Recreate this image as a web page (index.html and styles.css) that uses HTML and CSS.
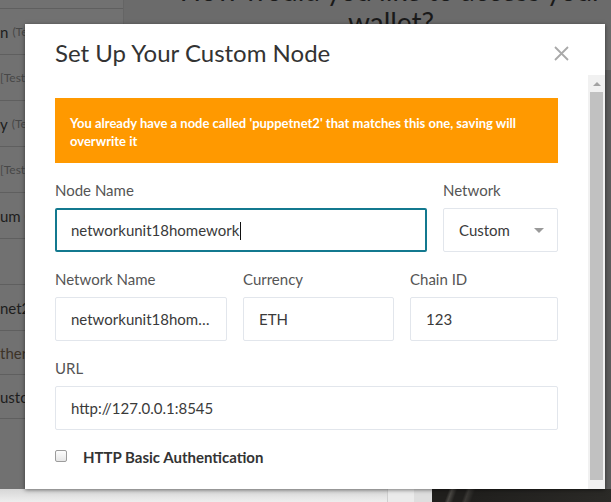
FILE: index.html
```html
<!DOCTYPE html>
<html lang="en">
<head>
<meta charset="utf-8">
<title>Set Up Your Custom Node</title>
<link rel="stylesheet" href="styles.css">
</head>
<body>
<div class="page">
  <div class="main">
    <aside class="sidebar">
      <div class="item first"></div>
      <div class="item"><span class="nm">n</span><span class="tag">(Testnet)</span></div>
      <div class="item"><span class="tag solo">[Testnet]</span></div>
      <div class="item"><span class="nm">y</span><span class="tag">(Testnet)</span></div>
      <div class="item"><span class="tag solo">[Testnet]</span></div>
      <div class="item"><span class="nm">um Classic</span></div>
      <div class="item"></div>
      <div class="item"><span class="nm">net2</span></div>
      <div class="item short"><span class="nm other">ther Networks</span></div>
      <div class="item short"><span class="nm">ustom</span></div>
    </aside>
    <section class="content">
      <h1 class="hero">How would you like to access your wallet?</h1>
    </section>
  </div>
  <footer class="strip">
    <div class="strip-left"><span class="strip-text">ected and is connected.</span></div>
    <div class="strip-mid"></div>
    <div class="strip-mid2"></div>
    <div class="strip-photo"></div>
  </footer>
</div>

<div class="modal">
  <div class="modal-head">
    <h2 class="modal-title">Set Up Your Custom Node</h2>
    <svg class="close" width="15" height="15" viewBox="0 0 15 15" aria-label="Close">
      <path d="M1 1 L14 14 M14 1 L1 14" stroke="#a9a9a9" stroke-width="1.8" fill="none"/>
    </svg>
  </div>
  <div class="modal-body">
    <div class="body-inner">
      <div class="alert">You already have a node called 'puppetnet2' that matches this one, saving will overwrite it</div>

      <div class="row row-1">
        <div class="field">
          <span class="label">Node Name</span>
          <div class="input focus">networkunit18homework<span class="cursor"></span></div>
        </div>
        <div class="field">
          <span class="label">Network</span>
          <div class="input select"><span>Custom</span><span class="caret"></span></div>
        </div>
      </div>

      <div class="row row-2">
        <div class="field">
          <span class="label">Network Name</span>
          <div class="input">networkunit18homework</div>
        </div>
        <div class="field">
          <span class="label">Currency</span>
          <div class="input">ETH</div>
        </div>
        <div class="field">
          <span class="label">Chain ID</span>
          <div class="input">123</div>
        </div>
      </div>

      <div class="row row-3">
        <div class="field">
          <span class="label">URL</span>
          <div class="input">http://127.0.0.1:8545</div>
        </div>
      </div>

      <div class="check-row">
        <span class="checkbox"></span>
        <span class="check-label">HTTP Basic Authentication</span>
      </div>
    </div>
    <div class="scrollbar">
      <div class="sb-up"><span class="sb-arrow"></span></div>
      <div class="sb-thumb"></div>
    </div>
  </div>
</div>
</body>
</html>
```

FILE: styles.css
```css
html, body {
  margin: 0;
  padding: 0;
}

body {
  width: 611px;
  height: 502px;
  overflow: hidden;
  position: relative;
  font-family: Lato, "Open Sans", "Liberation Sans", sans-serif;
}

.page {
  display: flex;
  flex-direction: column;
  height: 502px;
}

.main {
  display: flex;
  height: 489px;
  flex: none;
  overflow: hidden;
  background:
    linear-gradient(to bottom, #6b6b6b 70px, transparent 70px) 605px 0 / 6px 100% no-repeat,
    linear-gradient(to right, #6b6b6b 605px, #5c5c5c 605px);
}

.sidebar {
  width: 123px;
  flex: none;
  background: #717171;
  border-right: 1px solid #656565;
}

.item {
  height: 45px;
  border-bottom: 1px solid #5f5f5f;
  display: flex;
  align-items: center;
  white-space: nowrap;
  overflow: hidden;
}

.item.first {
  height: 8px;
}

.item.short {
  height: 43px;
}

.nm {
  font-size: 15px;
  color: #1d1d1d;
}

.nm.other {
  color: #3d3328;
}

.tag {
  font-size: 12px;
  color: #474747;
  margin-left: 4px;
}

.tag.solo {
  margin-left: 0;
}

.content {
  flex: 1;
  min-width: 0;
}

.hero {
  width: 460px;
  margin: -26px 0 0 37px;
  font-size: 28px;
  line-height: 32px;
  font-weight: 400;
  text-align: center;
  color: #1a1a1a;
}

.strip {
  height: 13px;
  flex: none;
  display: flex;
  overflow: hidden;
}

.strip-left {
  width: 387px;
  background: linear-gradient(#d6d6d6, #eeeeee);
  overflow: hidden;
  white-space: nowrap;
}

.strip-text {
  display: block;
  margin-top: -13px;
  font-size: 13px;
  line-height: 16px;
  color: #2a2a2a;
}

.strip-mid {
  width: 26px;
  border-left: 1px solid #cfcfcf;
  background: #ebebeb;
}

.strip-mid2 {
  width: 18px;
  background: #dedede;
}

.strip-photo {
  flex: 1;
  background: linear-gradient(110deg, #201f1d 0, #201f1d 16px, #4a4844 19px, #201f1d 24px, #201f1d 32px, #3a3835 35px, #201f1d 41px, #2b2a27 100%);
}

/* Modal */
.modal {
  position: absolute;
  left: 25px;
  top: 24px;
  width: 580px;
  height: 465px;
  background: #fff;
  display: flex;
  flex-direction: column;
  box-shadow: 0 1px 4px rgba(0, 0, 0, 0.5);
}

.modal-head {
  height: 51px;
  box-sizing: border-box;
  padding: 14px 36px 0 30px;
  display: flex;
  justify-content: space-between;
  align-items: flex-start;
  flex: none;
}

.modal-title {
  margin: 0;
  font-size: 24px;
  line-height: 29px;
  font-weight: 400;
  color: #333;
}

.close {
  margin-top: 8px;
}

.modal-body {
  flex: 1;
  display: flex;
  min-height: 0;
}

.body-inner {
  flex: 1;
  padding: 23px 30px 0 30px;
  overflow: hidden;
}

.alert {
  background: #ff9900;
  color: #fff;
  font-weight: 700;
  font-size: 13px;
  line-height: 18px;
  padding: 16px 15px 13px;
}

.row {
  display: grid;
  column-gap: 16px;
  margin-top: 17px;
}

.row-1 {
  grid-template-columns: 372px 1fr;
}

.row-2 {
  grid-template-columns: 172px 151px 1fr;
}

.row-3 {
  grid-template-columns: 1fr;
}

.field {
  min-width: 0;
}

.label {
  display: block;
  font-size: 15px;
  line-height: 20px;
  color: #555;
  margin-bottom: 8px;
}

.input {
  height: 44px;
  box-sizing: border-box;
  border: 1px solid #e2e6ec;
  border-radius: 2px;
  padding: 0 15px;
  font-size: 15px;
  line-height: 42px;
  color: #3a3a3a;
  white-space: nowrap;
  overflow: hidden;
  text-overflow: ellipsis;
}

.input.focus {
  border: 2px solid #13798f;
  padding-left: 14px;
  line-height: 40px;
}

.cursor {
  display: inline-block;
  width: 1px;
  height: 18px;
  background: #111;
  vertical-align: -4px;
  margin-left: 1px;
}

.input.select {
  display: flex;
  justify-content: space-between;
  align-items: center;
  padding-right: 13px;
}

.caret {
  width: 0;
  height: 0;
  border-left: 5px solid transparent;
  border-right: 5px solid transparent;
  border-top: 5px solid #9a9a9a;
}

.check-row {
  margin-top: 17px;
  height: 20px;
  display: flex;
  align-items: center;
  gap: 16px;
}

.checkbox {
  width: 12px;
  height: 12px;
  box-sizing: border-box;
  border: 1px solid #9c9c9c;
  border-radius: 2px;
  background: linear-gradient(#fdfdfd, #e6e6e6);
  margin-bottom: 3px;
}

.check-label {
  font-size: 15px;
  font-weight: 700;
  color: #333;
}

.scrollbar {
  width: 17px;
  flex: none;
  background: #f1f1f1;
  display: flex;
  flex-direction: column;
}

.sb-up {
  height: 17px;
  display: flex;
  align-items: center;
  justify-content: center;
}

.sb-arrow {
  width: 0;
  height: 0;
  border-left: 4px solid transparent;
  border-right: 4px solid transparent;
  border-bottom: 4px solid #a3a3a3;
}

.sb-thumb {
  height: 388px;
  margin: 0 2px;
  background: #c1c1c1;
}
```
